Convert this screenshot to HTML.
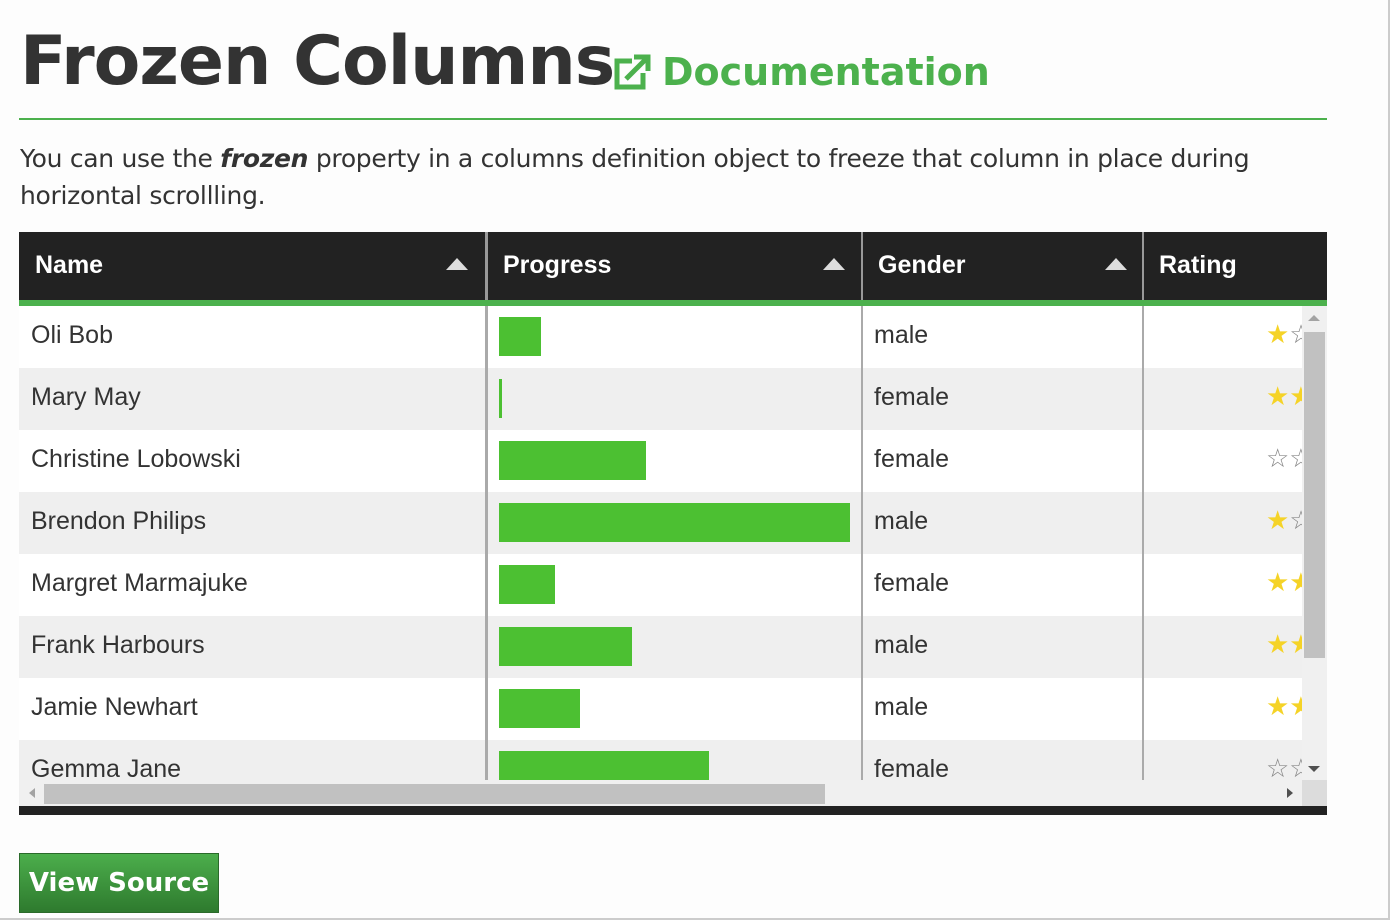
<!DOCTYPE html>
<html><head><meta charset="utf-8"><style>
body{margin:0;width:1390px;height:920px;background:#fdfdfd;font-family:"Liberation Sans",sans-serif;position:relative;overflow:hidden}
.a{position:absolute}
h1{position:absolute;left:20px;top:22px;margin:0;font:bold 68px "DejaVu Sans","Liberation Sans",sans-serif;color:#333;letter-spacing:-1px}
.doc{left:612px;top:50px;font:bold 38px "DejaVu Sans",sans-serif;color:#4cb14d;display:flex;align-items:center;gap:10px}
.rule{left:19px;top:118px;width:1308px;height:2px;background:#4cb14d}
.p{left:20px;top:140px;font:25px "DejaVu Sans",sans-serif;color:#333;line-height:37px;width:1300px;letter-spacing:-0.3px}
.hd{left:19px;top:232px;width:1308px;height:68px;background:#222}
.hd div{position:absolute;top:0;height:68px;line-height:66px;color:#fff;font-weight:bold;font-size:25px}
.tri{position:absolute;top:26px;width:0;height:0;border-left:11px solid transparent;border-right:11px solid transparent;border-bottom:12px solid #ddd}
.gl{left:19px;top:300px;width:1308px;height:6px;background:#4cb14d}
.row{position:absolute;left:19px;width:1283px;height:62px;font-size:25px;color:#333}
.row span{position:absolute;top:15px}
.bar{position:absolute;left:480px;top:11px;height:39px;background:#4cc032}
.st{position:absolute;left:1247px;top:13px;font-size:26px}
</style></head><body>
<h1>Frozen Columns</h1>
<div class="a doc"><svg width="40" height="38" viewBox="0 0 40 38"><path d="M20 8H5v26h26V20" fill="none" stroke="#4cb14d" stroke-width="5"/><path d="M14 26L34 6M22 4h14v14" fill="none" stroke="#4cb14d" stroke-width="5"/></svg>Documentation</div>
<div class="a rule"></div>
<div class="a p">You can use the <b><i>frozen</i></b> property in a columns definition object to freeze that column in place during horizontal scrollling.</div>
<div class="a hd">
<div style="left:16px">Name</div><span class="tri" style="left:427px"></span>
<div style="left:466px;width:3px;background:#999"></div>
<div style="left:484px">Progress</div><span class="tri" style="left:804px"></span>
<div style="left:842px;width:2px;background:#999"></div>
<div style="left:859px">Gender</div><span class="tri" style="left:1086px"></span>
<div style="left:1123px;width:2px;background:#999"></div>
<div style="left:1140px">Rating</div>
</div>
<div class="a gl"></div>
<div class="a" style="left:19px;top:306px;width:1308px;height:474px;overflow:hidden;background:#fff">
<div class="row" style="left:0;top:0;background:#fff"><span style="left:12px">Oli Bob</span><div class="bar" style="width:42px"></div><span style="left:855px">male</span><div class="st" style="color:#f5d327">★<span style="position:static;color:#888">☆</span></div></div>
<div class="row" style="left:0;top:62px;background:#efefef"><span style="left:12px">Mary May</span><div class="bar" style="width:3px"></div><span style="left:855px">female</span><div class="st" style="color:#f5d327">★★</div></div>
<div class="row" style="left:0;top:124px;background:#fff"><span style="left:12px">Christine Lobowski</span><div class="bar" style="width:147px"></div><span style="left:855px">female</span><div class="st" style="color:#888">☆☆</div></div>
<div class="row" style="left:0;top:186px;background:#efefef"><span style="left:12px">Brendon Philips</span><div class="bar" style="width:351px"></div><span style="left:855px">male</span><div class="st" style="color:#f5d327">★<span style="position:static;color:#888">☆</span></div></div>
<div class="row" style="left:0;top:248px;background:#fff"><span style="left:12px">Margret Marmajuke</span><div class="bar" style="width:56px"></div><span style="left:855px">female</span><div class="st" style="color:#f5d327">★★</div></div>
<div class="row" style="left:0;top:310px;background:#efefef"><span style="left:12px">Frank Harbours</span><div class="bar" style="width:133px"></div><span style="left:855px">male</span><div class="st" style="color:#f5d327">★★</div></div>
<div class="row" style="left:0;top:372px;background:#fff"><span style="left:12px">Jamie Newhart</span><div class="bar" style="width:81px"></div><span style="left:855px">male</span><div class="st" style="color:#f5d327">★★</div></div>
<div class="row" style="left:0;top:434px;background:#efefef"><span style="left:12px">Gemma Jane</span><div class="bar" style="width:210px"></div><span style="left:855px">female</span><div class="st" style="color:#888">☆☆</div></div>
<div class="a" style="left:466px;top:0;width:3px;height:474px;background:#aaa"></div>
<div class="a" style="left:842px;top:0;width:2px;height:474px;background:#aaa"></div>
<div class="a" style="left:1123px;top:0;width:2px;height:474px;background:#aaa"></div>
<div class="a" style="left:1283px;top:0;width:25px;height:474px;background:#f0f0f0"></div>
<div class="a" style="left:1285px;top:26px;width:21px;height:326px;background:#c1c1c1"></div>
<div class="a" style="left:1289px;top:9px;border-left:6px solid transparent;border-right:6px solid transparent;border-bottom:6px solid #a3a3a3"></div>
<div class="a" style="left:1289px;top:460px;border-left:6px solid transparent;border-right:6px solid transparent;border-top:6px solid #505050"></div>
</div>
<div class="a" style="left:19px;top:780px;width:1283px;height:26px;background:#f0f0f0"></div>
<div class="a" style="left:1302px;top:780px;width:25px;height:26px;background:#dcdcdc"></div>
<div class="a" style="left:44px;top:784px;width:781px;height:20px;background:#c1c1c1"></div>
<div class="a" style="left:29px;top:788px;border-top:5px solid transparent;border-bottom:5px solid transparent;border-right:6px solid #a3a3a3"></div>
<div class="a" style="left:1287px;top:788px;border-top:5px solid transparent;border-bottom:5px solid transparent;border-left:6px solid #505050"></div>
<div class="a" style="left:19px;top:806px;width:1308px;height:9px;background:#222"></div>
<div class="a" style="left:19px;top:853px;width:198px;height:58px;background:linear-gradient(#4cae4c,#2e7a2e);border:1px solid #2a6a2a;color:#fff;font:bold 26px 'DejaVu Sans',sans-serif;line-height:58px;text-align:center">View Source</div>
<div class="a" style="left:1388px;top:0;width:2px;height:920px;background:#ccc"></div>
<div class="a" style="left:0;top:918px;width:1390px;height:2px;background:#ccc"></div>
</body></html>
